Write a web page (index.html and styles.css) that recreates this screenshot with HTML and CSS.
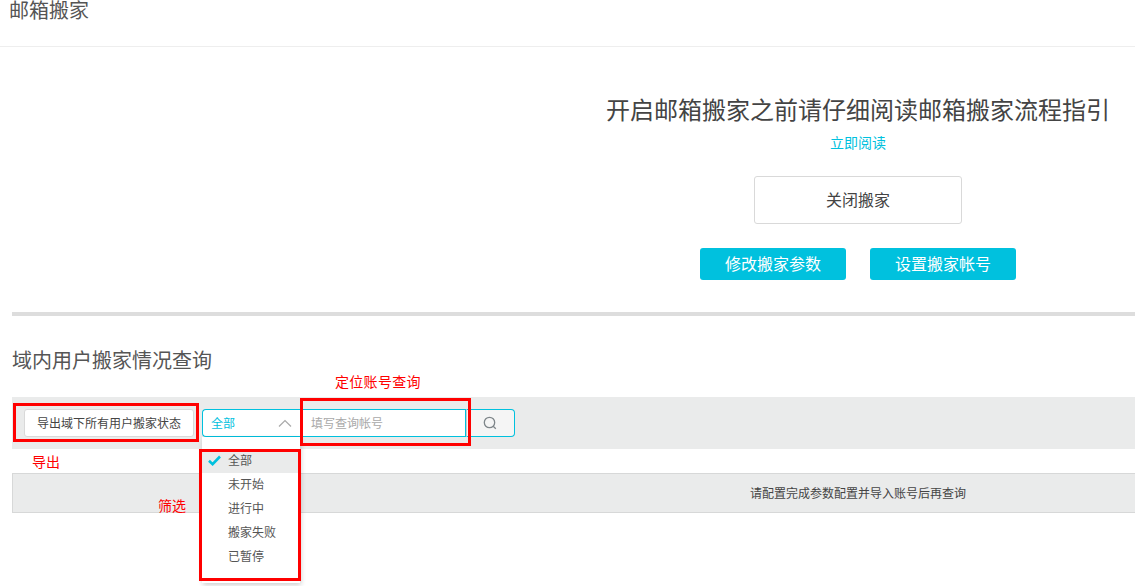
FILE: index.html
```html
<!DOCTYPE html>
<html lang="zh-CN">
<head>
<meta charset="utf-8">
<title>邮箱搬家</title>
<link rel="stylesheet" href="styles.css">
</head>
<body>
<header class="page-header"><h1 class="page-title">邮箱搬家</h1></header>
<section class="intro">
  <h2 class="intro-title">开启邮箱搬家之前请仔细阅读邮箱搬家流程指引</h2>
  <a class="intro-link">立即阅读</a>
  <button class="btn-close">关闭搬家</button>
  <div class="intro-actions">
    <button class="btn-primary">修改搬家参数</button>
    <button class="btn-primary">设置搬家帐号</button>
  </div>
</section>
<section class="query">
  <h3 class="query-title">域内用户搬家情况查询</h3>
  <div class="toolbar">
    <button class="btn-export">导出域下所有用户搬家状态</button>
    <div class="select">
      <span>全部</span>
      <svg class="chevron" width="14" height="8" viewBox="0 0 14 8"><path d="M1 7.5 7 1.5l6 6" fill="none" stroke="#a9a9a9" stroke-width="1.2"/></svg>
    </div>
    <div class="search">
      <span class="search-input">填写查询帐号</span>
      <span class="search-btn">
        <svg class="search-icon" width="14" height="14" viewBox="0 0 14 14"><circle cx="6.5" cy="6.5" r="5.2" fill="none" stroke="#7f868a" stroke-width="1.3"/><path d="M10.2 10.2l2.6 2.6" stroke="#7f868a" stroke-width="1.3"/></svg>
      </span>
    </div>
  </div>
  <div class="table-empty">请配置完成参数配置并导入账号后再查询</div>
</section>

<ul class="menu">
  <li class="menu-item is-active">
    <svg class="check" width="13" height="11" viewBox="0 0 13 11"><path d="M1 5.8l3.6 3.4L12 1.5" fill="none" stroke="#00c1de" stroke-width="2.6"/></svg>全部</li>
  <li class="menu-item">未开始</li>
  <li class="menu-item">进行中</li>
  <li class="menu-item">搬家失败</li>
  <li class="menu-item">已暂停</li>
</ul>

<div class="mark mark-export"></div>
<div class="mark mark-search"></div>
<div class="mark mark-menu"></div>
<span class="note note-search">定位账号查询</span>
<span class="note note-export">导出</span>
<span class="note note-filter">筛选</span>
</body>
</html>
```
FILE: styles.css
```css
* { box-sizing: border-box; }
html, body { margin: 0; padding: 0; }
body {
  width: 1135px;
  height: 586px;
  overflow: hidden;
  position: relative;
  background: #fff;
  color: #444;
  font-family: "Noto Sans CJK SC", "Liberation Sans", sans-serif;
  font-size: 12px;
}
button { font-family: inherit; cursor: pointer; }

.page-header { height: 47px; border-bottom: 1px solid #eee; padding-left: 9px; }
.page-title { margin: 0; font-size: 20px; font-weight: 400; line-height: 20px; color: #555; }

.intro { margin-left: 581px; display: flex; flex-direction: column; align-items: center; height: 265px; }
.intro-title { margin: 45px 0 0; font-size: 24px; line-height: 34px; font-weight: 400; color: #444; white-space: nowrap; }
.intro-link { margin-top: 6px; font-size: 14px; line-height: 20px; color: #00c1de; }
.btn-close {
  margin-top: 24px; width: 208px; height: 48px; padding: 0 0 3px;
  background: #fff; border: 1px solid #d9d9d9; border-radius: 3px;
  font-size: 16px; color: #444;
}
.intro-actions { display: flex; gap: 24px; margin-top: 24px; }
.btn-primary {
  width: 146px; height: 32px; border: 0; border-radius: 3px; padding: 0 0 3px;
  background: #00c1de; color: #fff; font-size: 16px;
}

.query { margin-left: 12px; border-top: 4px solid #ddd; }
.query-title { margin: 30px 0 0; font-size: 20px; line-height: 28px; font-weight: 400; color: #555; }
.toolbar {
  margin-top: 23px; height: 52px; background: #eaebeb;
  display: flex; align-items: center; padding-left: 12px;
}
.btn-export {
  width: 170px; height: 28px; padding: 0 0 2px;
  background: #fff; border: 1px solid #d9d9d9; border-radius: 3px;
  font-size: 12px; color: #444;
}
.select {
  margin-left: 8px; width: 100px; height: 28px;
  background: #fff; border: 1px solid #00c1de; border-right: 0; border-radius: 4px 0 0 4px;
  color: #00c1de; display: flex; align-items: center; justify-content: space-between;
  padding: 0 10px 1px 8px;
}
.search { display: flex; height: 28px; }
.search-input {
  width: 164px; background: #fff; border: 1px solid #00c1de; border-left: 0;
  color: #a9a9a9; line-height: 25px; padding-left: 9px;
}
.search-btn {
  width: 49px; background: #f5f5f5; border: 1px solid #00c1de; border-left-color: #c8c8c8;
  border-radius: 0 4px 4px 0; display: flex; align-items: center; justify-content: center;
  padding-right: 2px;
}
.table-empty {
  margin-top: 24px; height: 40px; background: #eaebeb;
  border: 1px solid #d7d8d8; border-width: 1px 0 1px 1px;
  padding-left: 737px; line-height: 38px; white-space: nowrap;
  color: #444;
}

.menu {
  position: absolute; left: 202px; top: 437px; width: 98px; height: 146px;
  margin: 0; padding: 12px 0 0; list-style: none; background: #fff;
  box-shadow: 1px 2px 5px rgba(0,0,0,.2);
}
.menu-item { position: relative; height: 24px; line-height: 22px; padding-left: 26px; color: #555; }
.menu-item.is-active { background: #eaebeb; }
.check { position: absolute; left: 6px; top: 6px; }

.mark { position: absolute; border: 3px solid #f00; }
.mark-export { left: 13px; top: 403px; width: 186px; height: 39px; }
.mark-search { left: 300px; top: 398px; width: 171px; height: 48px; }
.mark-menu { left: 199px; top: 449px; width: 102px; height: 132px; }
.note { position: absolute; color: #f00; font-size: 14px; line-height: 16px; }
.note-search { left: 335px; top: 373px; letter-spacing: .3px; }
.note-export { left: 32px; top: 453px; }
.note-filter { left: 158px; top: 497px; }
```
